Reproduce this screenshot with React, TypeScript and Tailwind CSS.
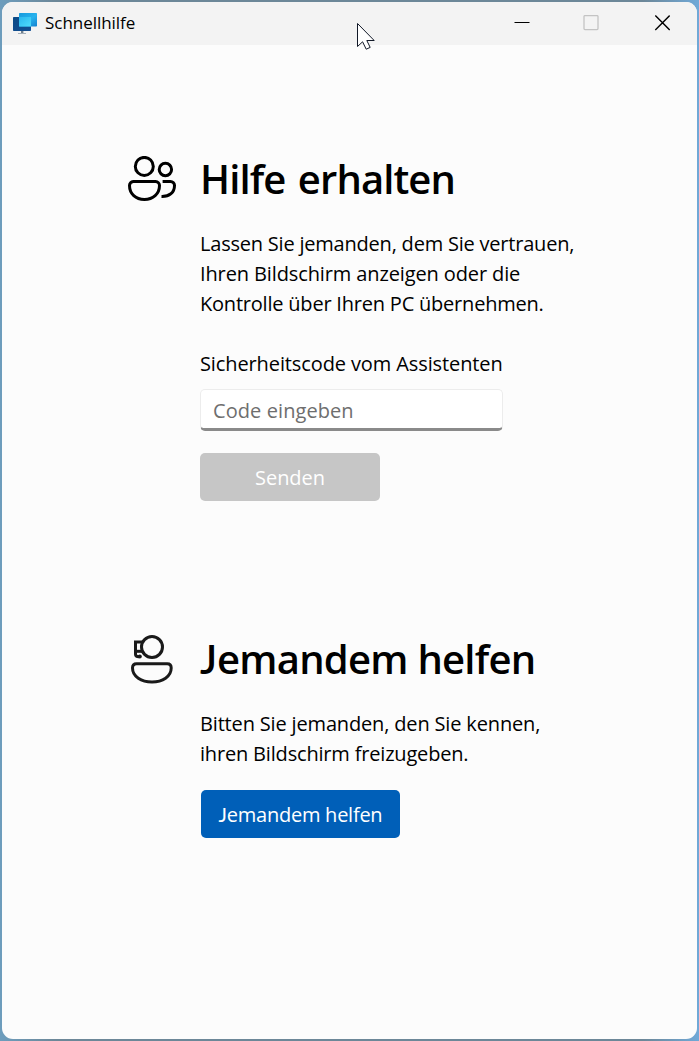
import React from "react";

function AppIcon() {
  return (
    <svg width="26" height="24" viewBox="0 0 26 24" className="shrink-0">
      <defs>
        <linearGradient id="back" x1="0" y1="0" x2="1" y2="1">
          <stop offset="0" stopColor="#0b4a86" />
          <stop offset="1" stopColor="#134f93" />
        </linearGradient>
        <linearGradient id="front" x1="0" y1="0" x2="1" y2="1">
          <stop offset="0" stopColor="#1799dc" />
          <stop offset="0.55" stopColor="#27b3ee" />
          <stop offset="1" stopColor="#1480cf" />
        </linearGradient>
        <linearGradient id="overlap" x1="0" y1="0" x2="1" y2="1">
          <stop offset="0" stopColor="#2bb7ef" />
          <stop offset="1" stopColor="#4fdcfb" />
        </linearGradient>
      </defs>
      <path d="M9 18h2.4v3H9z" fill="#6f7f8d" />
      <path d="M6 21h8v1H6z" fill="#a4afb9" />
      <rect x="1" y="5" width="18" height="14" rx="0.8" fill="url(#back)" />
      <rect x="7" y="1" width="18" height="13.5" rx="0.8" fill="url(#front)" />
      <rect x="7" y="5" width="12" height="9.5" fill="url(#overlap)" />
    </svg>
  );
}

function PeopleIcon() {
  return (
    <svg width="48" height="46" viewBox="0 0 48 46" fill="none" stroke="#000" strokeWidth="3">
      <circle cx="16.3" cy="10.4" r="9" />
      <circle cx="37.4" cy="13.5" r="6.2" />
      <path d="M5.3 25.4H27.5A4.2 4.2 0 0 1 31.5 29.6C31.5 38 25 43.5 16.4 43.5S1.5 38 1.5 29.6A4.2 4.2 0 0 1 5.3 25.4Z" />
      <path d="M34.6 25.4H42.4A4.1 4.1 0 0 1 46.5 29.4C46.5 36.5 41.5 40.7 33.5 40.5" />
    </svg>
  );
}

function HelperIcon() {
  return (
    <svg width="44" height="50" viewBox="0 0 44 50" fill="none" stroke="#1a1a1a" strokeWidth="3">
      <circle cx="22" cy="13" r="10.5" />
      <path d="M12 8H5.5V20.2Q5.5 22.8 9 22.8" />
      <path d="M5.5 17.3H12" />
      <circle cx="9.8" cy="22.6" r="2" fill="#1a1a1a" stroke="none" />
      <path d="M6.6 29.8H37.2Q41.2 29.8 41.2 34C41.2 42.5 32.6 48 22 48S2.5 42.5 2.5 34Q2.5 29.8 6.6 29.8Z" />
    </svg>
  );
}

function Cursor() {
  return (
    <svg width="20" height="29" viewBox="0 0 20 29" className="absolute left-[355px] top-[21px]">
      <path
        d="M2.5 2.5V25.5L7.6 20.8L11.2 28.2L15.2 26.4L11.8 19.5H19.2Z"
        fill="#fff"
        stroke="#111827"
        strokeWidth="1"
      />
    </svg>
  );
}

function TitleBar() {
  return (
    <header className="flex h-[43px] shrink-0 items-center bg-[#f3f3f3] pl-[10px]">
      <AppIcon />
      <h1 className="ml-[7px] whitespace-nowrap pb-[2px] text-[17px] leading-6 tracking-[-0.04px]">Schnellhilfe</h1>
      <div className="ml-auto flex h-full items-center pb-[2px]">
        <button aria-label="Minimieren" className="flex h-full w-[69px] items-center justify-center">
          <svg width="16" height="16"><path d="M0.5 7.5H15.5" stroke="#000" /></svg>
        </button>
        <button aria-label="Maximieren" disabled className="flex h-full w-[70px] items-center justify-center">
          <svg width="16" height="16"><rect x="1" y="0.6" width="14" height="14" rx="1" fill="none" stroke="#c3c3c3" strokeWidth="1.3" /></svg>
        </button>
        <button aria-label="Schließen" className="flex h-full w-[71px] items-center justify-center">
          <svg width="16" height="16"><path d="M1.3 0.6L15.7 15M15.7 0.6L1.3 15" stroke="#000" strokeWidth="1.4" /></svg>
        </button>
      </div>
    </header>
  );
}

export default function App() {
  return (
    <div className="relative h-[1041px] w-[699px] bg-[linear-gradient(90deg,#6d9dbd,#6c8798_8%,#6c8798_92%,#70a9d8)] p-[2px] font-['Open_Sans','Noto_Sans',sans-serif] text-black">
      <div className="flex h-full flex-col overflow-hidden rounded-[11px] bg-[#fcfcfc]">
        <TitleBar />
        <main className="flex flex-col pl-[126px]">
          <section className="flex h-[480px] items-start pt-[110px]">
            <div className="w-[72px] shrink-0 pt-px"><PeopleIcon /></div>
            <div className="flex flex-col items-start">
              <h2 className="-mt-[4px] whitespace-nowrap text-[40px] font-semibold leading-[56px] tracking-[-0.9px] [word-spacing:3px]">Hilfe erhalten</h2>
              <p className="mt-[22px] whitespace-nowrap text-[20px] leading-[30px]">
                <span className="block w-fit tracking-[-0.21px]">Lassen Sie jemanden, dem Sie vertrauen,</span>
                <span className="block w-fit tracking-[-0.12px]">Ihren Bildschirm anzeigen oder die</span>
                <span className="block w-fit tracking-[-0.21px]">Kontrolle über Ihren PC übernehmen.</span>
              </p>
              <label htmlFor="code" className="mt-[30px] whitespace-nowrap text-[20px] leading-[30px] tracking-[-0.11px]">Sicherheitscode vom Assistenten</label>
              <input id="code" placeholder="Code eingeben" className="mt-[10px] h-[42px] w-[303px] rounded-[5px] border border-b-[3px] border-[#ececec] border-b-[#8a8a8a] bg-white px-3 pt-[2px] text-[20px] tracking-[0.08px] placeholder:text-[#6e6e6e]" />
              <button disabled className="mt-[22px] h-12 w-[180px] rounded-[5px] bg-[#c6c6c6] pt-[2px] text-[20px] tracking-[-0.05px] text-white">Senden</button>
            </div>
          </section>
          <section className="flex items-start pt-[109px]">
            <div className="w-[72px] shrink-0 pl-[2px]"><HelperIcon /></div>
            <div className="flex flex-col items-start">
              <h2 className="-mt-[3px] whitespace-nowrap text-[40px] font-semibold leading-[56px] tracking-[-0.75px]"><span className="font-['Lato'] tracking-[0px]">J</span>emandem helfen</h2>
              <p className="mt-[22px] whitespace-nowrap text-[20px] leading-[30px]">
                <span className="block w-fit tracking-[-0.16px]">Bitten Sie jemanden, den Sie kennen,</span>
                <span className="block w-fit tracking-[-0.18px]">ihren Bildschirm freizugeben.</span>
              </p>
              <button className="ml-px mt-[21px] h-12 w-[199px] whitespace-nowrap rounded-[5px] bg-[#005fb8] text-[20px] tracking-[-0.25px] text-white"><span className="font-['Lato']">J</span>emandem helfen</button>
            </div>
          </section>
        </main>
      </div>
      <Cursor />
    </div>
  );
}
